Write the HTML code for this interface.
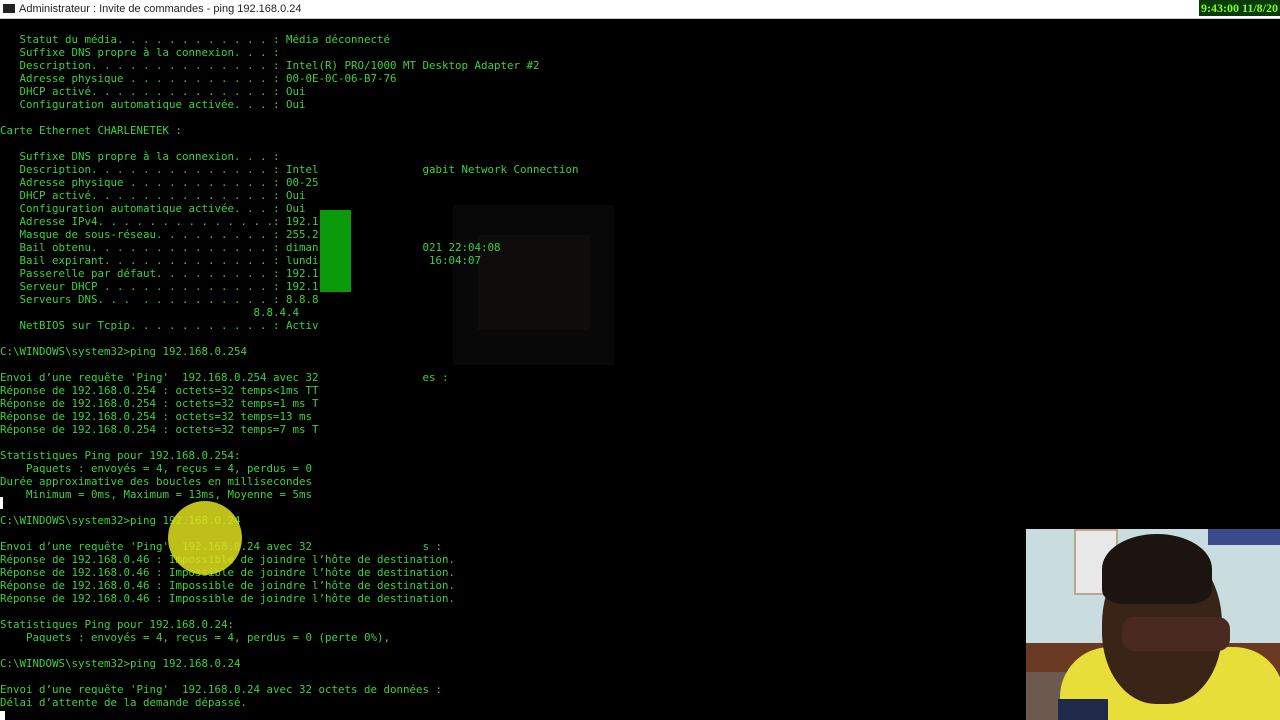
<!DOCTYPE html>
<html><head><meta charset="utf-8"><style>
body{margin:0;width:1280px;height:720px;background:#000;overflow:hidden;position:relative;font-family:"Liberation Mono",monospace}
.bar{position:absolute;left:0;top:0;width:1280px;height:18px;background:#fff;border-bottom:1px solid #ccc}
.bar .t{position:absolute;left:19px;top:3px;font:11px "Liberation Sans",sans-serif;color:#222}
.bar .ic{position:absolute;left:3px;top:4px;width:12px;height:9px;background:#222}
.clock{position:absolute;right:0;top:0;height:16px;padding:0 2px;background:#0a3a0a;color:#7dfc2e;font:bold 12px "Liberation Serif",serif;line-height:16px}
pre{position:absolute;left:0;top:33px;margin:0;font-size:10.8px;line-height:13px;color:#3ed03e;white-space:pre}
</style></head><body>
<div class="bar"><div class="ic"></div><div class="t">Administrateur : Invite de commandes - ping  192.168.0.24</div><div class="clock">9:43:00  11/8/20</div></div>
<div style="position:absolute;left:453px;top:205px;width:161px;height:160px;background:#080808"></div>
<div style="position:absolute;left:478px;top:235px;width:112px;height:95px;background:#0f0d0b"></div>
<pre>   Statut du média. . . . . . . . . . . . : Média déconnecté
   Suffixe DNS propre à la connexion. . . :
   Description. . . . . . . . . . . . . . : Intel(R) PRO/1000 MT Desktop Adapter #2
   Adresse physique . . . . . . . . . . . : 00-0E-0C-06-B7-76
   DHCP activé. . . . . . . . . . . . . . : Oui
   Configuration automatique activée. . . : Oui

Carte Ethernet CHARLENETEK :

   Suffixe DNS propre à la connexion. . . :
   Description. . . . . . . . . . . . . . : Intel                gabit Network Connection
   Adresse physique . . . . . . . . . . . : 00-25
   DHCP activé. . . . . . . . . . . . . . : Oui
   Configuration automatique activée. . . : Oui
   Adresse IPv4. . . . . . . . . . . . . .: 192.1
   Masque de sous-réseau. . . . . . . . . : 255.2
   Bail obtenu. . . . . . . . . . . . . . : diman                021 22:04:08
   Bail expirant. . . . . . . . . . . . . : lundi                 16:04:07
   Passerelle par défaut. . . . . . . . . : 192.1
   Serveur DHCP . . . . . . . . . . . . . : 192.1
   Serveurs DNS. . .  . . . . . . . . . . : 8.8.8
                                       8.8.4.4
   NetBIOS sur Tcpip. . . . . . . . . . . : Activ

C:\WINDOWS\system32>ping 192.168.0.254

Envoi d’une requête 'Ping'  192.168.0.254 avec 32                es :
Réponse de 192.168.0.254 : octets=32 temps&lt;1ms TT
Réponse de 192.168.0.254 : octets=32 temps=1 ms T
Réponse de 192.168.0.254 : octets=32 temps=13 ms
Réponse de 192.168.0.254 : octets=32 temps=7 ms T

Statistiques Ping pour 192.168.0.254:
    Paquets : envoyés = 4, reçus = 4, perdus = 0
Durée approximative des boucles en millisecondes
    Minimum = 0ms, Maximum = 13ms, Moyenne = 5ms

C:\WINDOWS\system32>ping 192.168.0.24

Envoi d’une requête 'Ping'  192.168.0.24 avec 32                 s :
Réponse de 192.168.0.46 : Impossible de joindre l’hôte de destination.
Réponse de 192.168.0.46 : Impossible de joindre l’hôte de destination.
Réponse de 192.168.0.46 : Impossible de joindre l’hôte de destination.
Réponse de 192.168.0.46 : Impossible de joindre l’hôte de destination.

Statistiques Ping pour 192.168.0.24:
    Paquets : envoyés = 4, reçus = 4, perdus = 0 (perte 0%),

C:\WINDOWS\system32>ping 192.168.0.24

Envoi d’une requête 'Ping'  192.168.0.24 avec 32 octets de données :
Délai d’attente de la demande dépassé.</pre>
<div style="position:absolute;left:320px;top:210px;width:31px;height:82px;background:#0a9a0a"></div>
<div style="position:absolute;left:0;top:497px;width:3px;height:12px;background:#fff"></div>
<div style="position:absolute;left:0;top:711px;width:5px;height:9px;background:#fff"></div>
<div style="position:absolute;left:168px;top:501px;width:74px;height:74px;border-radius:50%;background:rgba(225,225,30,.85)"></div>
<div style="position:absolute;left:1026px;top:529px;width:254px;height:191px;background:#c9dde0;overflow:hidden">
 <div style="position:absolute;left:0;top:114px;width:254px;height:77px;background:#6b3a22"></div>
 <div style="position:absolute;left:0;top:143px;width:40px;height:48px;background:#6d5a4e"></div>
 <div style="position:absolute;left:48px;top:0;width:40px;height:62px;background:#e8e8e8;border:2px solid #b9a78e"></div>
 <div style="position:absolute;left:182px;top:0;width:72px;height:16px;background:#3a4a8a"></div>
 <div style="position:absolute;left:34px;top:118px;width:224px;height:90px;border-radius:50px 50px 0 0;background:#e8de3a"></div>
 <div style="position:absolute;left:76px;top:15px;width:120px;height:160px;border-radius:50% 50% 45% 45%;background:#3a2418"></div>
 <div style="position:absolute;left:76px;top:5px;width:110px;height:70px;border-radius:50% 50% 20% 20%;background:#1c1410"></div>
 <div style="position:absolute;left:96px;top:88px;width:108px;height:34px;border-radius:12px;background:#4a2a20"></div>
 <div style="position:absolute;left:32px;top:170px;width:50px;height:30px;background:#1f2a4a"></div>
</div>
</body></html>
